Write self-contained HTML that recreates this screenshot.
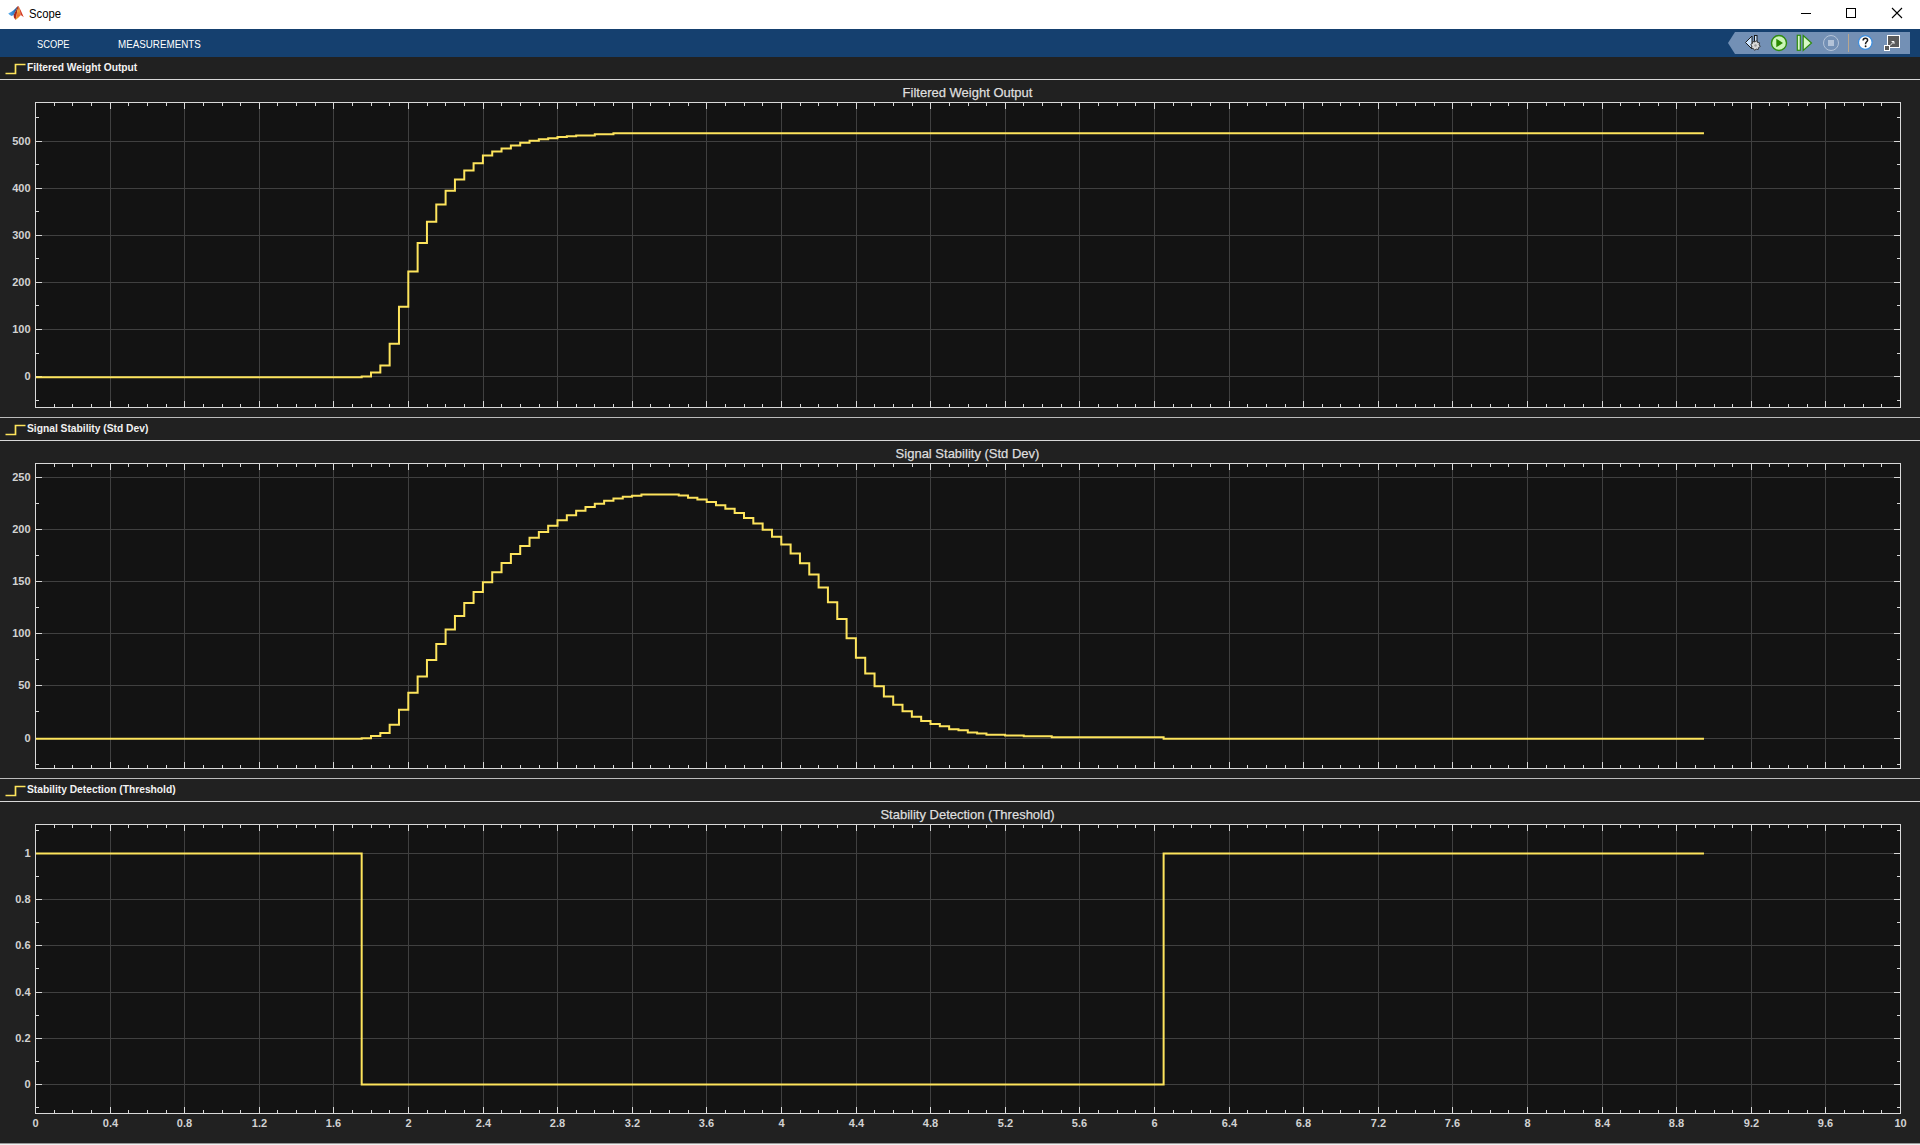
<!DOCTYPE html>
<html><head><meta charset="utf-8"><title>Scope</title>
<style>html,body{margin:0;padding:0;}body{width:1920px;height:1145px;position:relative;overflow:hidden;background:#212121;font-family:'Liberation Sans', sans-serif;}</style>
</head><body>

<div style="position:absolute;left:0;top:0;width:1920px;height:29px;background:#ffffff"></div>
<svg width="30" height="29" style="position:absolute;left:0;top:0" viewBox="0 0 30 29">
  <defs>
   <linearGradient id="mgb" x1="0" y1="0" x2="1" y2="0"><stop offset="0" stop-color="#5cb0ec"/><stop offset="0.55" stop-color="#3587d0"/><stop offset="1" stop-color="#233f70"/></linearGradient>
   <linearGradient id="mgo" x1="0" y1="0" x2="0" y2="1"><stop offset="0" stop-color="#c4402a"/><stop offset="0.35" stop-color="#eea23a"/><stop offset="0.7" stop-color="#ec6f2c"/><stop offset="1" stop-color="#f2b52e"/></linearGradient>
   <linearGradient id="mgr" x1="0" y1="0" x2="1" y2="1"><stop offset="0" stop-color="#8a1612"/><stop offset="1" stop-color="#c4402a"/></linearGradient>
  </defs>
  <path d="M8.2,13.5 L11,12 L13.3,10.5 L15.2,8.8 L17.4,6.6 L16.6,9.6 L15,12.2 L13.6,14.9 L11.6,15.9 L9.8,15.1 Z" fill="url(#mgb)"/>
  <path d="M18.5,5.9 L17.2,12 L15.6,19.9 L13.9,17.6 L13.6,14.9 L15,12.2 L16.6,9.6 L17.4,6.6 Z" fill="url(#mgr)"/>
  <path d="M18.5,5.9 L19.8,9.6 L20.6,15.2 L18.6,17.4 L15.6,19.9 L16.8,13.5 Z" fill="url(#mgo)"/>
  <path d="M18.5,5.9 L20.8,10.4 L22.6,14.6 L23.7,17.2 L21.6,15.6 L20.6,15.2 L19.8,9.6 Z" fill="#d43b22"/>
</svg>
<div style="position:absolute;left:29px;top:7px;font-family:'Liberation Sans', sans-serif;font-size:12px;color:#000;line-height:14px;transform:scaleX(0.94);transform-origin:0 0">Scope</div>
<svg width="120" height="29" style="position:absolute;left:1790px;top:0" viewBox="1790 0 120 29">
  <rect x="1801" y="13" width="10" height="1" fill="#000"/>
  <rect x="1846.5" y="8.5" width="9" height="9" fill="none" stroke="#000" stroke-width="1"/>
  <path d="M1892,8 L1902,18 M1902,8 L1892,18" stroke="#000" stroke-width="1.1"/>
</svg>


<div style="position:absolute;left:0;top:29px;width:1920px;height:28px;background:#15406f"></div>
<div style="position:absolute;left:37px;top:38px;font-family:'Liberation Sans', sans-serif;font-size:11px;color:#ffffff;line-height:13px;transform:scaleX(0.845);transform-origin:0 0;white-space:nowrap">SCOPE</div>
<div style="position:absolute;left:118px;top:38px;font-family:'Liberation Sans', sans-serif;font-size:11px;color:#ffffff;line-height:13px;transform:scaleX(0.891);transform-origin:0 0;white-space:nowrap">MEASUREMENTS</div>
<svg width="200" height="28" style="position:absolute;left:1720px;top:29px" viewBox="1720 29 200 28">
  <polygon points="1728,43 1735,32 1910,32 1910,54 1735,54" fill="#7390b5"/>
  <!-- step back -->
  <path d="M1745.5,42.5 L1752,36 L1752,49 Z" fill="#cfe6ff" stroke="#1a1a1a" stroke-width="1"/>
  <rect x="1754.5" y="35.5" width="2.5" height="8" fill="#cfe6ff" stroke="#1a1a1a" stroke-width="1"/>
  <g transform="translate(1755.5,45.5)">
    <polygon points="4.81,0.96 3.08,2.06 2.72,4.07 0.72,3.63 -0.96,4.81 -2.06,3.08 -4.07,2.72 -3.63,0.72 -4.81,-0.96 -3.08,-2.06 -2.72,-4.07 -0.72,-3.63 0.96,-4.81 2.06,-3.08 4.07,-2.72 3.63,-0.72" fill="#d8d8d8" stroke="#222" stroke-width="0.8" stroke-linejoin="round"/>
    <circle r="1.2" fill="#999"/>
  </g>
  <!-- run -->
  <circle cx="1779" cy="43" r="7.5" fill="#ccf5b8" stroke="#2e8b0e" stroke-width="1.4"/>
  <path d="M1776.3,38.8 L1783,43 L1776.3,47.2 Z" fill="#2a8a00"/>
  <!-- step fwd -->
  <rect x="1797.3" y="35.3" width="3" height="15" fill="#d8f8c8" stroke="#2e8b0e" stroke-width="1.2"/>
  <path d="M1803.2,35.5 L1811.5,43 L1803.2,50.5 Z" fill="#d8f8c8" stroke="#2e8b0e" stroke-width="1.2"/>
  <!-- stop -->
  <circle cx="1831" cy="43" r="7.5" fill="none" stroke="#b3c3d8" stroke-width="1"/>
  <rect x="1828" y="40" width="6" height="6" fill="#b3c3d8"/>
  <rect x="1848" y="34" width="1" height="18" fill="#b8a68e"/>
  <!-- help -->
  <circle cx="1865.3" cy="42.5" r="6.8" fill="#ffffff" stroke="#3b8ee0" stroke-width="1.2"/>
  <path d="M1863.1,40.6 C1863.1,38.9 1864.1,38.2 1865.4,38.2 C1866.8,38.2 1867.6,39.1 1867.6,40.2 C1867.6,41.6 1865.6,41.9 1865.6,43.6 L1865.6,44.3" fill="none" stroke="#1e1e1e" stroke-width="1.5"/>
  <circle cx="1865.6" cy="46.2" r="0.95" fill="#1e1e1e"/>
  <!-- undock -->
  <rect x="1887.5" y="35.5" width="12" height="12" fill="#5a5a5a" stroke="#ffffff" stroke-width="1"/>
  <rect x="1884.5" y="45.5" width="5" height="5" fill="#5a5a5a" stroke="#ffffff" stroke-width="1"/>
  <path d="M1890.3,45.2 L1894,41.5 M1891.6,41.5 h2.4 v2.4" stroke="#ffffff" stroke-width="1" fill="none"/>
</svg>

<svg width="1920" height="1088" viewBox="0 57 1920 1088" style="position:absolute;left:0;top:57px;display:block">
<rect x="0" y="57" width="1920" height="1088" fill="#212121"/>
<rect x="0" y="79" width="1920" height="1" fill="#d8d8d8" shape-rendering="crispEdges"/>
<polyline points="5.5,73.5 15.5,73.5 15.5,64.5 25.5,64.5" fill="none" stroke="#fde45c" stroke-width="1.7"/>
<text x="27" y="71" font-family='"Liberation Sans", sans-serif' font-size="10.25" font-weight="700" fill="#f2f2f2">Filtered Weight Output</text>
<rect x="35" y="102" width="1866" height="306" fill="#131313"/>
<text x="967.5" y="97" text-anchor="middle" font-family='"Liberation Sans", sans-serif' font-size="13" fill="#dedede" stroke="#dedede" stroke-width="0.25">Filtered Weight Output</text>
<path d="M110.5,103V407M184.5,103V407M259.5,103V407M333.5,103V407M408.5,103V407M483.5,103V407M557.5,103V407M632.5,103V407M706.5,103V407M781.5,103V407M856.5,103V407M930.5,103V407M1005.5,103V407M1079.5,103V407M1154.5,103V407M1229.5,103V407M1303.5,103V407M1378.5,103V407M1452.5,103V407M1527.5,103V407M1602.5,103V407M1676.5,103V407M1751.5,103V407M1825.5,103V407M36,141.5H1900M36,188.5H1900M36,235.5H1900M36,282.5H1900M36,329.5H1900M36,376.5H1900" stroke="#404040" stroke-width="1" fill="none" shape-rendering="crispEdges"/>
<path d="M35.5,103v6M35.5,407v-6M54.5,103v3M54.5,407v-3M72.5,103v3M72.5,407v-3M91.5,103v3M91.5,407v-3M110.5,103v6M110.5,407v-6M128.5,103v3M128.5,407v-3M147.5,103v3M147.5,407v-3M166.5,103v3M166.5,407v-3M184.5,103v6M184.5,407v-6M203.5,103v3M203.5,407v-3M222.5,103v3M222.5,407v-3M240.5,103v3M240.5,407v-3M259.5,103v6M259.5,407v-6M277.5,103v3M277.5,407v-3M296.5,103v3M296.5,407v-3M315.5,103v3M315.5,407v-3M333.5,103v6M333.5,407v-6M352.5,103v3M352.5,407v-3M371.5,103v3M371.5,407v-3M389.5,103v3M389.5,407v-3M408.5,103v6M408.5,407v-6M427.5,103v3M427.5,407v-3M445.5,103v3M445.5,407v-3M464.5,103v3M464.5,407v-3M483.5,103v6M483.5,407v-6M501.5,103v3M501.5,407v-3M520.5,103v3M520.5,407v-3M539.5,103v3M539.5,407v-3M557.5,103v6M557.5,407v-6M576.5,103v3M576.5,407v-3M594.5,103v3M594.5,407v-3M613.5,103v3M613.5,407v-3M632.5,103v6M632.5,407v-6M650.5,103v3M650.5,407v-3M669.5,103v3M669.5,407v-3M688.5,103v3M688.5,407v-3M706.5,103v6M706.5,407v-6M725.5,103v3M725.5,407v-3M744.5,103v3M744.5,407v-3M762.5,103v3M762.5,407v-3M781.5,103v6M781.5,407v-6M800.5,103v3M800.5,407v-3M818.5,103v3M818.5,407v-3M837.5,103v3M837.5,407v-3M856.5,103v6M856.5,407v-6M874.5,103v3M874.5,407v-3M893.5,103v3M893.5,407v-3M912.5,103v3M912.5,407v-3M930.5,103v6M930.5,407v-6M949.5,103v3M949.5,407v-3M968.5,103v3M968.5,407v-3M986.5,103v3M986.5,407v-3M1005.5,103v6M1005.5,407v-6M1023.5,103v3M1023.5,407v-3M1042.5,103v3M1042.5,407v-3M1061.5,103v3M1061.5,407v-3M1079.5,103v6M1079.5,407v-6M1098.5,103v3M1098.5,407v-3M1117.5,103v3M1117.5,407v-3M1135.5,103v3M1135.5,407v-3M1154.5,103v6M1154.5,407v-6M1173.5,103v3M1173.5,407v-3M1191.5,103v3M1191.5,407v-3M1210.5,103v3M1210.5,407v-3M1229.5,103v6M1229.5,407v-6M1247.5,103v3M1247.5,407v-3M1266.5,103v3M1266.5,407v-3M1285.5,103v3M1285.5,407v-3M1303.5,103v6M1303.5,407v-6M1322.5,103v3M1322.5,407v-3M1340.5,103v3M1340.5,407v-3M1359.5,103v3M1359.5,407v-3M1378.5,103v6M1378.5,407v-6M1396.5,103v3M1396.5,407v-3M1415.5,103v3M1415.5,407v-3M1434.5,103v3M1434.5,407v-3M1452.5,103v6M1452.5,407v-6M1471.5,103v3M1471.5,407v-3M1490.5,103v3M1490.5,407v-3M1508.5,103v3M1508.5,407v-3M1527.5,103v6M1527.5,407v-6M1546.5,103v3M1546.5,407v-3M1564.5,103v3M1564.5,407v-3M1583.5,103v3M1583.5,407v-3M1602.5,103v6M1602.5,407v-6M1620.5,103v3M1620.5,407v-3M1639.5,103v3M1639.5,407v-3M1658.5,103v3M1658.5,407v-3M1676.5,103v6M1676.5,407v-6M1695.5,103v3M1695.5,407v-3M1714.5,103v3M1714.5,407v-3M1732.5,103v3M1732.5,407v-3M1751.5,103v6M1751.5,407v-6M1769.5,103v3M1769.5,407v-3M1788.5,103v3M1788.5,407v-3M1807.5,103v3M1807.5,407v-3M1825.5,103v6M1825.5,407v-6M1844.5,103v3M1844.5,407v-3M1863.5,103v3M1863.5,407v-3M1881.5,103v3M1881.5,407v-3M1900.5,103v6M1900.5,407v-6M36,141.5h6M1900,141.5h-6M36,188.5h6M1900,188.5h-6M36,235.5h6M1900,235.5h-6M36,282.5h6M1900,282.5h-6M36,329.5h6M1900,329.5h-6M36,376.5h6M1900,376.5h-6M36,117.5h3M1900,117.5h-3M36,164.5h3M1900,164.5h-3M36,211.5h3M1900,211.5h-3M36,258.5h3M1900,258.5h-3M36,305.5h3M1900,305.5h-3M36,353.5h3M1900,353.5h-3M36,400.5h3M1900,400.5h-3" stroke="#d9d9d9" stroke-width="1" fill="none" shape-rendering="crispEdges"/>
<rect x="35.5" y="102.5" width="1865" height="305" stroke="#d9d9d9" stroke-width="1" fill="none" shape-rendering="crispEdges"/>
<text x="30.5" y="145" text-anchor="end" font-family='"Liberation Sans", sans-serif' font-size="11" font-weight="700" fill="#d2d2d2">500</text>
<text x="30.5" y="192" text-anchor="end" font-family='"Liberation Sans", sans-serif' font-size="11" font-weight="700" fill="#d2d2d2">400</text>
<text x="30.5" y="239" text-anchor="end" font-family='"Liberation Sans", sans-serif' font-size="11" font-weight="700" fill="#d2d2d2">300</text>
<text x="30.5" y="286" text-anchor="end" font-family='"Liberation Sans", sans-serif' font-size="11" font-weight="700" fill="#d2d2d2">200</text>
<text x="30.5" y="333" text-anchor="end" font-family='"Liberation Sans", sans-serif' font-size="11" font-weight="700" fill="#d2d2d2">100</text>
<text x="30.5" y="380" text-anchor="end" font-family='"Liberation Sans", sans-serif' font-size="11" font-weight="700" fill="#d2d2d2">0</text>
<path d="M36,377.30H361.68V376.55H371.00V372.60H380.33V365.40H389.65V343.68H398.98V306.77H408.30V271.55H417.63V243.04H426.95V221.68H436.27V204.49H445.60V190.64H454.93V179.50H464.25V170.53H473.58V163.31H482.90V155.41H492.23V151.60H501.55V148.50H510.88V145.59H520.20V142.72H529.53V140.79H538.85V139.28H548.17V138.30H557.50V137.03H566.82V136.18H576.15V135.38H594.80V134.30H613.45V133.17H1703.97" stroke="#fde45c" stroke-width="2" fill="none" stroke-linejoin="miter"/>
<rect x="0" y="440" width="1920" height="1" fill="#d8d8d8" shape-rendering="crispEdges"/>
<rect x="0" y="417" width="1920" height="1" fill="#bcbcbc" shape-rendering="crispEdges"/>
<polyline points="5.5,434.5 15.5,434.5 15.5,425.5 25.5,425.5" fill="none" stroke="#fde45c" stroke-width="1.7"/>
<text x="27" y="432" font-family='"Liberation Sans", sans-serif' font-size="10.25" font-weight="700" fill="#f2f2f2">Signal Stability (Std Dev)</text>
<rect x="35" y="463" width="1866" height="306" fill="#131313"/>
<text x="967.5" y="458" text-anchor="middle" font-family='"Liberation Sans", sans-serif' font-size="13" fill="#dedede" stroke="#dedede" stroke-width="0.25">Signal Stability (Std Dev)</text>
<path d="M110.5,464V768M184.5,464V768M259.5,464V768M333.5,464V768M408.5,464V768M483.5,464V768M557.5,464V768M632.5,464V768M706.5,464V768M781.5,464V768M856.5,464V768M930.5,464V768M1005.5,464V768M1079.5,464V768M1154.5,464V768M1229.5,464V768M1303.5,464V768M1378.5,464V768M1452.5,464V768M1527.5,464V768M1602.5,464V768M1676.5,464V768M1751.5,464V768M1825.5,464V768M36,477.5H1900M36,529.5H1900M36,581.5H1900M36,633.5H1900M36,685.5H1900M36,738.5H1900" stroke="#404040" stroke-width="1" fill="none" shape-rendering="crispEdges"/>
<path d="M35.5,464v6M35.5,768v-6M54.5,464v3M54.5,768v-3M72.5,464v3M72.5,768v-3M91.5,464v3M91.5,768v-3M110.5,464v6M110.5,768v-6M128.5,464v3M128.5,768v-3M147.5,464v3M147.5,768v-3M166.5,464v3M166.5,768v-3M184.5,464v6M184.5,768v-6M203.5,464v3M203.5,768v-3M222.5,464v3M222.5,768v-3M240.5,464v3M240.5,768v-3M259.5,464v6M259.5,768v-6M277.5,464v3M277.5,768v-3M296.5,464v3M296.5,768v-3M315.5,464v3M315.5,768v-3M333.5,464v6M333.5,768v-6M352.5,464v3M352.5,768v-3M371.5,464v3M371.5,768v-3M389.5,464v3M389.5,768v-3M408.5,464v6M408.5,768v-6M427.5,464v3M427.5,768v-3M445.5,464v3M445.5,768v-3M464.5,464v3M464.5,768v-3M483.5,464v6M483.5,768v-6M501.5,464v3M501.5,768v-3M520.5,464v3M520.5,768v-3M539.5,464v3M539.5,768v-3M557.5,464v6M557.5,768v-6M576.5,464v3M576.5,768v-3M594.5,464v3M594.5,768v-3M613.5,464v3M613.5,768v-3M632.5,464v6M632.5,768v-6M650.5,464v3M650.5,768v-3M669.5,464v3M669.5,768v-3M688.5,464v3M688.5,768v-3M706.5,464v6M706.5,768v-6M725.5,464v3M725.5,768v-3M744.5,464v3M744.5,768v-3M762.5,464v3M762.5,768v-3M781.5,464v6M781.5,768v-6M800.5,464v3M800.5,768v-3M818.5,464v3M818.5,768v-3M837.5,464v3M837.5,768v-3M856.5,464v6M856.5,768v-6M874.5,464v3M874.5,768v-3M893.5,464v3M893.5,768v-3M912.5,464v3M912.5,768v-3M930.5,464v6M930.5,768v-6M949.5,464v3M949.5,768v-3M968.5,464v3M968.5,768v-3M986.5,464v3M986.5,768v-3M1005.5,464v6M1005.5,768v-6M1023.5,464v3M1023.5,768v-3M1042.5,464v3M1042.5,768v-3M1061.5,464v3M1061.5,768v-3M1079.5,464v6M1079.5,768v-6M1098.5,464v3M1098.5,768v-3M1117.5,464v3M1117.5,768v-3M1135.5,464v3M1135.5,768v-3M1154.5,464v6M1154.5,768v-6M1173.5,464v3M1173.5,768v-3M1191.5,464v3M1191.5,768v-3M1210.5,464v3M1210.5,768v-3M1229.5,464v6M1229.5,768v-6M1247.5,464v3M1247.5,768v-3M1266.5,464v3M1266.5,768v-3M1285.5,464v3M1285.5,768v-3M1303.5,464v6M1303.5,768v-6M1322.5,464v3M1322.5,768v-3M1340.5,464v3M1340.5,768v-3M1359.5,464v3M1359.5,768v-3M1378.5,464v6M1378.5,768v-6M1396.5,464v3M1396.5,768v-3M1415.5,464v3M1415.5,768v-3M1434.5,464v3M1434.5,768v-3M1452.5,464v6M1452.5,768v-6M1471.5,464v3M1471.5,768v-3M1490.5,464v3M1490.5,768v-3M1508.5,464v3M1508.5,768v-3M1527.5,464v6M1527.5,768v-6M1546.5,464v3M1546.5,768v-3M1564.5,464v3M1564.5,768v-3M1583.5,464v3M1583.5,768v-3M1602.5,464v6M1602.5,768v-6M1620.5,464v3M1620.5,768v-3M1639.5,464v3M1639.5,768v-3M1658.5,464v3M1658.5,768v-3M1676.5,464v6M1676.5,768v-6M1695.5,464v3M1695.5,768v-3M1714.5,464v3M1714.5,768v-3M1732.5,464v3M1732.5,768v-3M1751.5,464v6M1751.5,768v-6M1769.5,464v3M1769.5,768v-3M1788.5,464v3M1788.5,768v-3M1807.5,464v3M1807.5,768v-3M1825.5,464v6M1825.5,768v-6M1844.5,464v3M1844.5,768v-3M1863.5,464v3M1863.5,768v-3M1881.5,464v3M1881.5,768v-3M1900.5,464v6M1900.5,768v-6M36,477.5h6M1900,477.5h-6M36,529.5h6M1900,529.5h-6M36,581.5h6M1900,581.5h-6M36,633.5h6M1900,633.5h-6M36,685.5h6M1900,685.5h-6M36,738.5h6M1900,738.5h-6M36,503.5h3M1900,503.5h-3M36,555.5h3M1900,555.5h-3M36,607.5h3M1900,607.5h-3M36,659.5h3M1900,659.5h-3M36,711.5h3M1900,711.5h-3M36,764.5h3M1900,764.5h-3" stroke="#d9d9d9" stroke-width="1" fill="none" shape-rendering="crispEdges"/>
<rect x="35.5" y="463.5" width="1865" height="305" stroke="#d9d9d9" stroke-width="1" fill="none" shape-rendering="crispEdges"/>
<text x="30.5" y="481" text-anchor="end" font-family='"Liberation Sans", sans-serif' font-size="11" font-weight="700" fill="#d2d2d2">250</text>
<text x="30.5" y="533" text-anchor="end" font-family='"Liberation Sans", sans-serif' font-size="11" font-weight="700" fill="#d2d2d2">200</text>
<text x="30.5" y="585" text-anchor="end" font-family='"Liberation Sans", sans-serif' font-size="11" font-weight="700" fill="#d2d2d2">150</text>
<text x="30.5" y="637" text-anchor="end" font-family='"Liberation Sans", sans-serif' font-size="11" font-weight="700" fill="#d2d2d2">100</text>
<text x="30.5" y="689" text-anchor="end" font-family='"Liberation Sans", sans-serif' font-size="11" font-weight="700" fill="#d2d2d2">50</text>
<text x="30.5" y="742" text-anchor="end" font-family='"Liberation Sans", sans-serif' font-size="11" font-weight="700" fill="#d2d2d2">0</text>
<path d="M36,738.75H361.68V738.23H371.00V735.93H380.33V733.12H389.65V724.87H398.98V709.85H408.30V692.84H417.63V676.46H426.95V660.09H436.27V644.12H445.60V629.52H454.93V615.95H464.25V602.91H473.58V591.96H482.90V582.15H492.23V572.34H501.55V563.06H510.88V554.09H520.20V546.05H529.53V537.71H538.85V531.95H548.17V525.77H557.50V520.22H566.82V515.25H576.15V510.84H585.48V506.98H594.80V503.66H604.12V500.84H613.45V498.53H622.77V496.71H632.10V495.66H641.42V494.41H678.73V495.56H688.05V497.85H697.38V499.52H706.70V502.09H716.02V505.20H725.35V508.86H734.67V513.10H744.00V517.96H753.32V523.47H762.65V529.70H771.98V536.70H781.30V544.56H790.62V553.38H799.95V563.32H809.27V574.58H818.60V587.45H827.92V602.14H837.25V618.98H846.58V638.20H855.90V657.63H865.23V673.45H874.55V686.18H883.87V696.43H893.20V704.68H902.52V711.33H911.85V716.67H921.17V720.98H930.50V724.04H939.83V726.23H949.15V729.15H958.48V730.30H967.80V732.49H977.13V733.53H986.45V734.68H1005.10V735.41H1023.75V736.35H1051.73V737.19H1163.62V738.75H1703.97" stroke="#fde45c" stroke-width="2" fill="none" stroke-linejoin="miter"/>
<rect x="0" y="801" width="1920" height="1" fill="#d8d8d8" shape-rendering="crispEdges"/>
<rect x="0" y="778" width="1920" height="1" fill="#bcbcbc" shape-rendering="crispEdges"/>
<polyline points="5.5,795.5 15.5,795.5 15.5,786.5 25.5,786.5" fill="none" stroke="#fde45c" stroke-width="1.7"/>
<text x="27" y="793" font-family='"Liberation Sans", sans-serif' font-size="10.25" font-weight="700" fill="#f2f2f2">Stability Detection (Threshold)</text>
<rect x="35" y="824" width="1866" height="290" fill="#131313"/>
<text x="967.5" y="819" text-anchor="middle" font-family='"Liberation Sans", sans-serif' font-size="13" fill="#dedede" stroke="#dedede" stroke-width="0.25">Stability Detection (Threshold)</text>
<path d="M110.5,825V1113M184.5,825V1113M259.5,825V1113M333.5,825V1113M408.5,825V1113M483.5,825V1113M557.5,825V1113M632.5,825V1113M706.5,825V1113M781.5,825V1113M856.5,825V1113M930.5,825V1113M1005.5,825V1113M1079.5,825V1113M1154.5,825V1113M1229.5,825V1113M1303.5,825V1113M1378.5,825V1113M1452.5,825V1113M1527.5,825V1113M1602.5,825V1113M1676.5,825V1113M1751.5,825V1113M1825.5,825V1113M36,853.5H1900M36,899.5H1900M36,945.5H1900M36,992.5H1900M36,1038.5H1900M36,1084.5H1900" stroke="#404040" stroke-width="1" fill="none" shape-rendering="crispEdges"/>
<path d="M35.5,825v6M35.5,1113v-6M54.5,825v3M54.5,1113v-3M72.5,825v3M72.5,1113v-3M91.5,825v3M91.5,1113v-3M110.5,825v6M110.5,1113v-6M128.5,825v3M128.5,1113v-3M147.5,825v3M147.5,1113v-3M166.5,825v3M166.5,1113v-3M184.5,825v6M184.5,1113v-6M203.5,825v3M203.5,1113v-3M222.5,825v3M222.5,1113v-3M240.5,825v3M240.5,1113v-3M259.5,825v6M259.5,1113v-6M277.5,825v3M277.5,1113v-3M296.5,825v3M296.5,1113v-3M315.5,825v3M315.5,1113v-3M333.5,825v6M333.5,1113v-6M352.5,825v3M352.5,1113v-3M371.5,825v3M371.5,1113v-3M389.5,825v3M389.5,1113v-3M408.5,825v6M408.5,1113v-6M427.5,825v3M427.5,1113v-3M445.5,825v3M445.5,1113v-3M464.5,825v3M464.5,1113v-3M483.5,825v6M483.5,1113v-6M501.5,825v3M501.5,1113v-3M520.5,825v3M520.5,1113v-3M539.5,825v3M539.5,1113v-3M557.5,825v6M557.5,1113v-6M576.5,825v3M576.5,1113v-3M594.5,825v3M594.5,1113v-3M613.5,825v3M613.5,1113v-3M632.5,825v6M632.5,1113v-6M650.5,825v3M650.5,1113v-3M669.5,825v3M669.5,1113v-3M688.5,825v3M688.5,1113v-3M706.5,825v6M706.5,1113v-6M725.5,825v3M725.5,1113v-3M744.5,825v3M744.5,1113v-3M762.5,825v3M762.5,1113v-3M781.5,825v6M781.5,1113v-6M800.5,825v3M800.5,1113v-3M818.5,825v3M818.5,1113v-3M837.5,825v3M837.5,1113v-3M856.5,825v6M856.5,1113v-6M874.5,825v3M874.5,1113v-3M893.5,825v3M893.5,1113v-3M912.5,825v3M912.5,1113v-3M930.5,825v6M930.5,1113v-6M949.5,825v3M949.5,1113v-3M968.5,825v3M968.5,1113v-3M986.5,825v3M986.5,1113v-3M1005.5,825v6M1005.5,1113v-6M1023.5,825v3M1023.5,1113v-3M1042.5,825v3M1042.5,1113v-3M1061.5,825v3M1061.5,1113v-3M1079.5,825v6M1079.5,1113v-6M1098.5,825v3M1098.5,1113v-3M1117.5,825v3M1117.5,1113v-3M1135.5,825v3M1135.5,1113v-3M1154.5,825v6M1154.5,1113v-6M1173.5,825v3M1173.5,1113v-3M1191.5,825v3M1191.5,1113v-3M1210.5,825v3M1210.5,1113v-3M1229.5,825v6M1229.5,1113v-6M1247.5,825v3M1247.5,1113v-3M1266.5,825v3M1266.5,1113v-3M1285.5,825v3M1285.5,1113v-3M1303.5,825v6M1303.5,1113v-6M1322.5,825v3M1322.5,1113v-3M1340.5,825v3M1340.5,1113v-3M1359.5,825v3M1359.5,1113v-3M1378.5,825v6M1378.5,1113v-6M1396.5,825v3M1396.5,1113v-3M1415.5,825v3M1415.5,1113v-3M1434.5,825v3M1434.5,1113v-3M1452.5,825v6M1452.5,1113v-6M1471.5,825v3M1471.5,1113v-3M1490.5,825v3M1490.5,1113v-3M1508.5,825v3M1508.5,1113v-3M1527.5,825v6M1527.5,1113v-6M1546.5,825v3M1546.5,1113v-3M1564.5,825v3M1564.5,1113v-3M1583.5,825v3M1583.5,1113v-3M1602.5,825v6M1602.5,1113v-6M1620.5,825v3M1620.5,1113v-3M1639.5,825v3M1639.5,1113v-3M1658.5,825v3M1658.5,1113v-3M1676.5,825v6M1676.5,1113v-6M1695.5,825v3M1695.5,1113v-3M1714.5,825v3M1714.5,1113v-3M1732.5,825v3M1732.5,1113v-3M1751.5,825v6M1751.5,1113v-6M1769.5,825v3M1769.5,1113v-3M1788.5,825v3M1788.5,1113v-3M1807.5,825v3M1807.5,1113v-3M1825.5,825v6M1825.5,1113v-6M1844.5,825v3M1844.5,1113v-3M1863.5,825v3M1863.5,1113v-3M1881.5,825v3M1881.5,1113v-3M1900.5,825v6M1900.5,1113v-6M36,853.5h6M1900,853.5h-6M36,899.5h6M1900,899.5h-6M36,945.5h6M1900,945.5h-6M36,992.5h6M1900,992.5h-6M36,1038.5h6M1900,1038.5h-6M36,1084.5h6M1900,1084.5h-6M36,830.5h3M1900,830.5h-3M36,876.5h3M1900,876.5h-3M36,922.5h3M1900,922.5h-3M36,968.5h3M1900,968.5h-3M36,1015.5h3M1900,1015.5h-3M36,1061.5h3M1900,1061.5h-3M36,1107.5h3M1900,1107.5h-3" stroke="#d9d9d9" stroke-width="1" fill="none" shape-rendering="crispEdges"/>
<rect x="35.5" y="824.5" width="1865" height="289" stroke="#d9d9d9" stroke-width="1" fill="none" shape-rendering="crispEdges"/>
<text x="30.5" y="857" text-anchor="end" font-family='"Liberation Sans", sans-serif' font-size="11" font-weight="700" fill="#d2d2d2">1</text>
<text x="30.5" y="903" text-anchor="end" font-family='"Liberation Sans", sans-serif' font-size="11" font-weight="700" fill="#d2d2d2">0.8</text>
<text x="30.5" y="949" text-anchor="end" font-family='"Liberation Sans", sans-serif' font-size="11" font-weight="700" fill="#d2d2d2">0.6</text>
<text x="30.5" y="996" text-anchor="end" font-family='"Liberation Sans", sans-serif' font-size="11" font-weight="700" fill="#d2d2d2">0.4</text>
<text x="30.5" y="1042" text-anchor="end" font-family='"Liberation Sans", sans-serif' font-size="11" font-weight="700" fill="#d2d2d2">0.2</text>
<text x="30.5" y="1088" text-anchor="end" font-family='"Liberation Sans", sans-serif' font-size="11" font-weight="700" fill="#d2d2d2">0</text>
<path d="M36,853.50H361.68V1084.50H1163.62V853.50H1703.97" stroke="#fde45c" stroke-width="2" fill="none" stroke-linejoin="miter"/>
<text x="35.5" y="1127" text-anchor="middle" font-family='"Liberation Sans", sans-serif' font-size="11" font-weight="700" fill="#d2d2d2">0</text>
<text x="110.5" y="1127" text-anchor="middle" font-family='"Liberation Sans", sans-serif' font-size="11" font-weight="700" fill="#d2d2d2">0.4</text>
<text x="184.5" y="1127" text-anchor="middle" font-family='"Liberation Sans", sans-serif' font-size="11" font-weight="700" fill="#d2d2d2">0.8</text>
<text x="259.5" y="1127" text-anchor="middle" font-family='"Liberation Sans", sans-serif' font-size="11" font-weight="700" fill="#d2d2d2">1.2</text>
<text x="333.5" y="1127" text-anchor="middle" font-family='"Liberation Sans", sans-serif' font-size="11" font-weight="700" fill="#d2d2d2">1.6</text>
<text x="408.5" y="1127" text-anchor="middle" font-family='"Liberation Sans", sans-serif' font-size="11" font-weight="700" fill="#d2d2d2">2</text>
<text x="483.5" y="1127" text-anchor="middle" font-family='"Liberation Sans", sans-serif' font-size="11" font-weight="700" fill="#d2d2d2">2.4</text>
<text x="557.5" y="1127" text-anchor="middle" font-family='"Liberation Sans", sans-serif' font-size="11" font-weight="700" fill="#d2d2d2">2.8</text>
<text x="632.5" y="1127" text-anchor="middle" font-family='"Liberation Sans", sans-serif' font-size="11" font-weight="700" fill="#d2d2d2">3.2</text>
<text x="706.5" y="1127" text-anchor="middle" font-family='"Liberation Sans", sans-serif' font-size="11" font-weight="700" fill="#d2d2d2">3.6</text>
<text x="781.5" y="1127" text-anchor="middle" font-family='"Liberation Sans", sans-serif' font-size="11" font-weight="700" fill="#d2d2d2">4</text>
<text x="856.5" y="1127" text-anchor="middle" font-family='"Liberation Sans", sans-serif' font-size="11" font-weight="700" fill="#d2d2d2">4.4</text>
<text x="930.5" y="1127" text-anchor="middle" font-family='"Liberation Sans", sans-serif' font-size="11" font-weight="700" fill="#d2d2d2">4.8</text>
<text x="1005.5" y="1127" text-anchor="middle" font-family='"Liberation Sans", sans-serif' font-size="11" font-weight="700" fill="#d2d2d2">5.2</text>
<text x="1079.5" y="1127" text-anchor="middle" font-family='"Liberation Sans", sans-serif' font-size="11" font-weight="700" fill="#d2d2d2">5.6</text>
<text x="1154.5" y="1127" text-anchor="middle" font-family='"Liberation Sans", sans-serif' font-size="11" font-weight="700" fill="#d2d2d2">6</text>
<text x="1229.5" y="1127" text-anchor="middle" font-family='"Liberation Sans", sans-serif' font-size="11" font-weight="700" fill="#d2d2d2">6.4</text>
<text x="1303.5" y="1127" text-anchor="middle" font-family='"Liberation Sans", sans-serif' font-size="11" font-weight="700" fill="#d2d2d2">6.8</text>
<text x="1378.5" y="1127" text-anchor="middle" font-family='"Liberation Sans", sans-serif' font-size="11" font-weight="700" fill="#d2d2d2">7.2</text>
<text x="1452.5" y="1127" text-anchor="middle" font-family='"Liberation Sans", sans-serif' font-size="11" font-weight="700" fill="#d2d2d2">7.6</text>
<text x="1527.5" y="1127" text-anchor="middle" font-family='"Liberation Sans", sans-serif' font-size="11" font-weight="700" fill="#d2d2d2">8</text>
<text x="1602.5" y="1127" text-anchor="middle" font-family='"Liberation Sans", sans-serif' font-size="11" font-weight="700" fill="#d2d2d2">8.4</text>
<text x="1676.5" y="1127" text-anchor="middle" font-family='"Liberation Sans", sans-serif' font-size="11" font-weight="700" fill="#d2d2d2">8.8</text>
<text x="1751.5" y="1127" text-anchor="middle" font-family='"Liberation Sans", sans-serif' font-size="11" font-weight="700" fill="#d2d2d2">9.2</text>
<text x="1825.5" y="1127" text-anchor="middle" font-family='"Liberation Sans", sans-serif' font-size="11" font-weight="700" fill="#d2d2d2">9.6</text>
<text x="1900.5" y="1127" text-anchor="middle" font-family='"Liberation Sans", sans-serif' font-size="11" font-weight="700" fill="#d2d2d2">10</text>
<rect x="0" y="1143" width="1920" height="1" fill="#9a9a9a"/><rect x="0" y="1144" width="1920" height="1" fill="#f0f0f0"/>
</svg>
</body></html>
